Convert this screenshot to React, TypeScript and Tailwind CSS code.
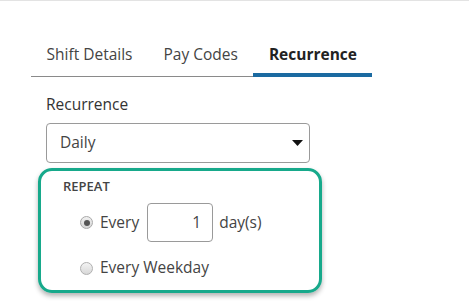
import { useState } from 'react';

const tabs = ['Shift Details', 'Pay Codes', 'Recurrence'];

export default function App() {
  const [active] = useState('Recurrence');

  return (
    <div className="w-[469px] h-[303px] overflow-hidden bg-white border-t border-[#e3e3e3] text-[#333] font-['Open_Sans',sans-serif]">
      {/* Tabs */}
      <div className="ml-[31px] mt-[42px] flex w-fit border-b border-[#8a8a8a]">
        {tabs.map((tab) => (
          <div
            key={tab}
            className={
              tab === active
                ? 'relative px-[15.5px] pb-[11px] text-[15.5px] leading-[22px] font-bold text-[#222]'
                : 'px-[15.5px] pb-[11px] text-[15.5px] leading-[22px] text-[#444]'
            }
          >
            {tab}
            {tab === active && (
              <span className="absolute left-0 right-0 -bottom-px h-[4px] bg-[#1b6aa1]" />
            )}
          </div>
        ))}
      </div>

      <div className="ml-[46px] mt-[16px] w-[264px]">
        <div className="text-[15.5px] leading-[22px] text-[#333]">Recurrence</div>

        {/* Select */}
        <div className="mt-[8px] flex h-[40px] items-center justify-between rounded-[4px] border border-[#9a9a9a] pl-[13px] pr-[6px] text-[15.5px] text-[#444]">
          <span>Daily</span>
          <svg width="11" height="6" viewBox="0 0 11 6">
            <path d="M0 0h11L5.5 6z" fill="#111" />
          </svg>
        </div>
      </div>

      {/* Repeat group */}
      <div className="ml-[38px] mt-[5px] w-[284px] h-[125px] rounded-[14px] border-[3px] border-[#17a98b] shadow-[0_3px_5px_rgba(0,0,0,0.3)] pl-[22px] pt-[7px]">
        <div className="text-[13px] leading-[16px] font-semibold text-[#444]">REPEAT</div>

        <div className="mt-[9px] ml-[17px] flex items-center">
          <span className="flex h-[13px] w-[13px] items-center justify-center rounded-full border border-[#a9a9a9] bg-gradient-to-b from-[#f0f0f0] to-[#d6d6d6]">
            <span className="h-[6px] w-[6px] rounded-full bg-[#555]" />
          </span>
          <span className="ml-[7px] text-[15.5px] text-[#444]">Every</span>
          <div className="ml-[8px] flex h-[39px] w-[66px] items-center justify-end rounded-[4px] border border-[#9a9a9a] pr-[11px] text-[15.5px] text-[#444]">
            1
          </div>
          <span className="ml-[6px] text-[15.5px] text-[#444]">day(s)</span>
        </div>

        <div className="mt-[15px] ml-[17px] flex h-[22px] items-center">
          <span className="h-[13px] w-[13px] rounded-full border border-[#b0b0b0] bg-gradient-to-b from-[#f3f3f3] to-[#d8d8d8]" />
          <span className="ml-[7px] text-[15.5px] text-[#444]">Every Weekday</span>
        </div>
      </div>
    </div>
  );
}
